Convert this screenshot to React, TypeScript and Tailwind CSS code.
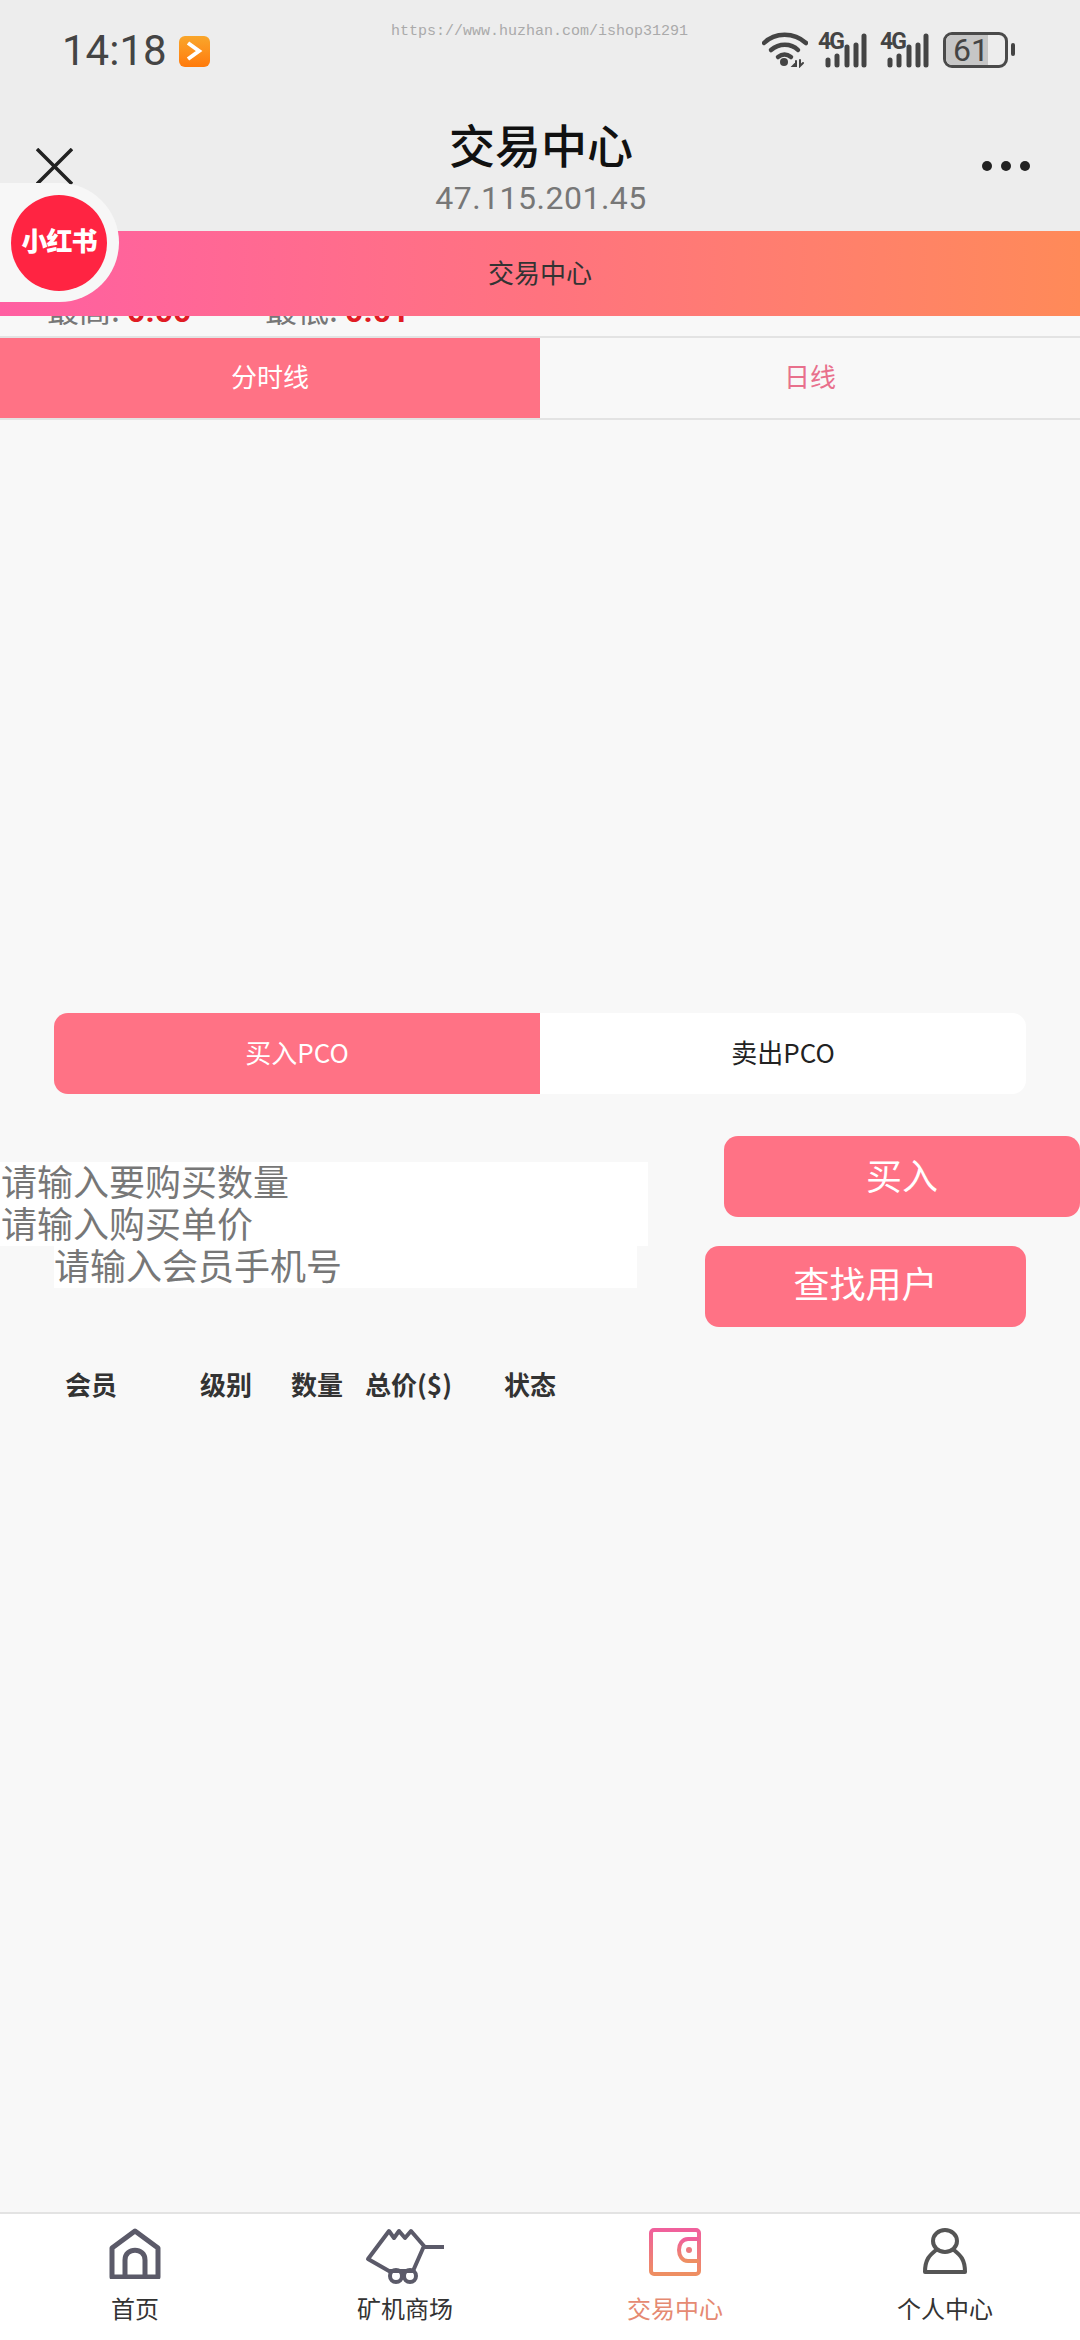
import React from 'react'

const cjk = { fontFamily: '"Noto Sans CJK SC", "Noto Sans", sans-serif' }

const Signal = () => (
  <div className="relative w-[50px] h-[36px]">
    <span className="absolute left-0 top-[-3px] text-[23px] font-bold leading-[26px] text-[#444] font-['Roboto',sans-serif] tracking-[-2px]">4G</span>
    <svg width="50" height="36" viewBox="0 0 50 36" fill="none" stroke="#444" strokeLinecap="round" strokeWidth="5">
      <path d="M10 28v5M19 24v9M29 15v18M38 13v20M46 4v29" />
    </svg>
  </div>
)

const StatusBar = () => (
  <div className="h-[100px] px-[62px] pr-[65px] pt-[29px] flex items-start justify-between text-[#444]">
    <div className="flex items-center gap-[12px]">
      <span className="text-[42px] leading-[44px] font-['Roboto',sans-serif]">14:18</span>
      <div className="w-[31px] h-[31px] rounded-[6px] bg-gradient-to-b from-[#f9a62a] to-[#ff7a0a] flex items-center justify-center">
        <svg width="18" height="20" viewBox="0 0 18 20" fill="none" stroke="#fff" strokeWidth="4">
          <path d="M3 2l11 8-11 8" />
        </svg>
      </div>
    </div>
    <div className="flex items-start pt-[3px]">
      <svg width="46" height="36" viewBox="0 0 46 36" fill="none" stroke="#444" strokeWidth="4.5" strokeLinecap="round">
        <path d="M2 11C13 0 32 0 44 11" />
        <path d="M9 18c8-7 20-7 27 0" />
        <path d="M16 25c4-3 9-3 13 0" />
        <circle cx="22" cy="30" r="4" fill="#444" stroke="none" />
        <path d="M34 31l-3 3h3v-5M38 28v6l3-3" strokeWidth="2" />
      </svg>
      <div className="ml-[10px]"><Signal /></div>
      <div className="ml-[12px]"><Signal /></div>
      <div className="ml-[13px] relative w-[65px] h-[36px] rounded-[9px] border-[3px] border-[#4a4a4a] overflow-hidden">
        <div className="h-full w-[42px] bg-[#c6c6c6] flex items-center justify-center">
          <span className="text-[32px] leading-none text-[#444] pl-[8px] font-['Roboto',sans-serif]">61</span>
        </div>
      </div>
      <div className="ml-[3px] mt-[11px] w-[4px] h-[13px] rounded-[2px] bg-[#444]" />
    </div>
  </div>
)

const Header = () => (
  <div className="h-[131px] flex items-start pl-[36px] pr-[50px]">
    <div className="flex-1">
      <svg className="mt-[48px]" width="37" height="37" viewBox="0 0 37 37" stroke="#222" strokeWidth="3.5">
        <path d="M1 1l35 35M36 1L1 36" />
      </svg>
    </div>
    <div className="flex flex-col items-center ml-[16px]">
      <div className="text-[46px] leading-[60px] text-[#111] mt-[13px] font-medium" style={cjk}>交易中心</div>
      <div className="text-[32px] leading-[38px] text-[#777] tracking-[0.5px] mt-[6px] font-['Roboto',sans-serif]">47.115.201.45</div>
    </div>
    <div className="flex-1 flex justify-end gap-[9px] pt-[61px]">
      <div className="w-[10px] h-[10px] rounded-full bg-[#222]" />
      <div className="w-[10px] h-[10px] rounded-full bg-[#222]" />
      <div className="w-[10px] h-[10px] rounded-full bg-[#222]" />
    </div>
  </div>
)

const HomeIcon = () => (
  <svg width="52" height="51" viewBox="0 0 52 51" fill="none" stroke="#5b5a69" strokeWidth="5">
    <path d="M3 49V20L26 3l23 17v29z" strokeLinejoin="round" />
    <path d="M16 49V32c0-13 20-13 20 0v17" />
  </svg>
)

const CartIcon = () => (
  <svg width="80" height="56" viewBox="0 0 80 56" fill="none" stroke="#5b5a69" strokeWidth="4">
    <path d="M24 3l5 7 5-7 6 7 6-7 13 15-11 25H24L3 31z" strokeLinejoin="round" />
    <path d="M60 19h19" />
    <circle cx="31" cy="48" r="6" />
    <circle cx="45" cy="48" r="6" />
  </svg>
)

const WalletIcon = () => (
  <svg width="52" height="48" viewBox="0 0 52 48" fill="none">
    <defs>
      <linearGradient id="wallet" x1="0" y1="0" x2="0" y2="1">
        <stop offset="0" stopColor="#f0609c" />
        <stop offset="1" stopColor="#ee8f62" />
      </linearGradient>
    </defs>
    <rect x="2" y="2" width="48" height="44" rx="3" stroke="url(#wallet)" strokeWidth="4" />
    <path d="M50 11H39c-12 0-12 22 0 22h11" stroke="url(#wallet)" strokeWidth="4" />
    <circle cx="40" cy="22" r="3" fill="#ec7a80" />
  </svg>
)

const UserIcon = () => (
  <svg width="44" height="46" viewBox="0 0 44 46" fill="none" stroke="#555" strokeWidth="4">
    <ellipse cx="22" cy="13" rx="12" ry="11" />
    <path d="M13 22C7 27 2 31 2 44h40c0-13-5-17-11-22" strokeLinejoin="round" />
  </svg>
)

const navItems = [
  { label: '首页', icon: <HomeIcon />, active: false },
  { label: '矿机商场', icon: <CartIcon />, active: false },
  { label: '交易中心', icon: <WalletIcon />, active: true },
  { label: '个人中心', icon: <UserIcon />, active: false },
]

export default function App() {
  return (
    <div className="relative w-[1080px] h-[2340px] bg-[#f8f8f8] overflow-hidden flex flex-col" style={cjk}>
      {/* top chrome */}
      <div className="bg-[#ededed]">
        <StatusBar />
        <Header />
      </div>
      <div className="absolute left-[391px] top-[22px] text-[15px] leading-[20px] text-[#aaa] font-['Liberation_Mono',monospace]">https://www.huzhan.com/ishop31291</div>

      {/* floating badge */}
      <div className="absolute left-0 top-[183px] w-[119px] h-[119px] rounded-r-[60px] bg-[#f7f7f7] flex items-center pl-[11px]">
        <div className="w-[96px] h-[96px] rounded-full bg-[#ff2442] flex items-center justify-center pb-[6px]">
          <span className="text-[26px] font-black text-white leading-none tracking-[-1px]">小红书</span>
        </div>
      </div>

      <div className="h-[85px] bg-gradient-to-r from-[#ff5fa2] via-[#ff737f] to-[#ff8a58] flex items-center justify-center pb-[5px] text-[26px] text-[#333]">交易中心</div>

      {/* price strip, mostly hidden under the title bar */}
      <div className="h-[20px] overflow-hidden border-b-2 border-[#e3e3e3] box-content">
        <div className="flex -mt-[28px] pl-[47px] text-[32px] leading-[40px] text-[#777]">
          <div className="w-[218px]">最高: <span className="text-[#e01b24] font-bold font-['Roboto',sans-serif]">0.00</span></div>
          <div>最低: <span className="text-[#e01b24] font-bold font-['Roboto',sans-serif]">0.01</span></div>
        </div>
      </div>

      <div className="h-[80px] flex border-b-2 border-[#e3e3e3] box-content text-[26px]">
        <div className="w-[540px] bg-[#ff7285] text-white flex items-center justify-center pb-[5px]">分时线</div>
        <div className="w-[540px] text-[#e8708c] flex items-center justify-center pb-[5px]">日线</div>
      </div>

      {/* chart area */}
      <div className="h-[593px]" />

      <div className="mx-[54px] h-[81px] flex rounded-[14px] overflow-hidden text-[26px]">
        <div className="w-[486px] bg-[#ff7285] text-white flex items-center justify-center pb-[4px]">买入PCO</div>
        <div className="flex-1 bg-white text-[#222] flex items-center justify-center pb-[4px]">卖出PCO</div>
      </div>

      <div className="mt-[42px] h-[110px] flex justify-between items-start">
        <div className="w-[648px] mt-[26px] bg-white text-[36px] leading-[36px] text-[#777] pl-[1px]">
          <div className="h-[42px]">请输入要购买数量</div>
          <div className="h-[42px]">请输入购买单价</div>
        </div>
        <div className="w-[356px] h-[81px] rounded-[14px] bg-[#ff7285] text-white text-[36px] flex items-center justify-center pb-[6px]">买入</div>
      </div>

      <div className="px-[54px] flex justify-between items-start">
        <div className="w-[583px] h-[42px] bg-white text-[36px] leading-[36px] text-[#777]">请输入会员手机号</div>
        <div className="w-[321px] h-[81px] rounded-[14px] bg-[#ff7285] text-white text-[36px] flex items-center justify-center pb-[9px]">查找用户</div>
      </div>

      <div className="mt-[36px] flex h-[40px] items-center text-[26px] font-bold text-[#333]">
        <div className="ml-[65px] w-[135px]">会员</div>
        <div className="w-[91px]">级别</div>
        <div className="w-[74px]">数量</div>
        <div className="w-[139px]">总价($)</div>
        <div>状态</div>
      </div>

      <div className="flex-1" />

      {/* bottom tab bar */}
      <div className="h-[126px] bg-white border-t-2 border-[#e3e3e3] box-content grid grid-cols-4">
        {navItems.map((item) => (
          <div key={item.label} className="flex flex-col items-center pt-[14px]">
            <div className="h-[56px] flex items-start justify-center">{item.icon}</div>
            <div className={`mt-[6px] text-[24px] leading-[36px] ${item.active ? 'text-[#e58a72]' : 'text-[#333]'}`}>{item.label}</div>
          </div>
        ))}
      </div>
    </div>
  )
}
